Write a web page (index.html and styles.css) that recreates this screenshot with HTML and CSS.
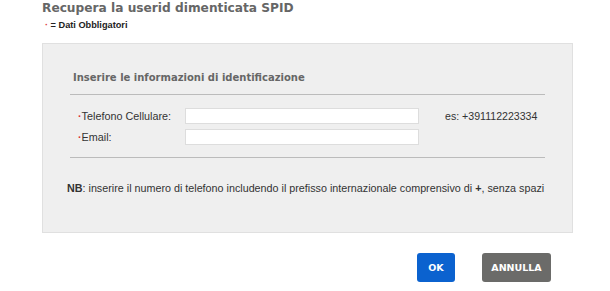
FILE: index.html
```html
<!DOCTYPE html>
<html lang="it">
<head>
    <meta charset="UTF-8">
    <title>Recupera userid SPID</title>
    <link rel="stylesheet" href="styles.css">
</head>
<body>
    <div class="page">
        <h1>Recupera la userid dimenticata SPID</h1>
        <p class="legend"><span class="req">&middot;</span> = Dati Obbligatori</p>

        <div class="panel">
            <h2>Inserire le informazioni di identificazione</h2>

            <div class="fields">
                <div class="row">
                    <label for="tel"><span class="req">&middot;</span>Telefono Cellulare:</label>
                    <input type="text" id="tel">
                    <span class="hint">es: +391112223334</span>
                </div>
                <div class="row">
                    <label for="email"><span class="req">&middot;</span>Email:</label>
                    <input type="text" id="email">
                </div>
            </div>

            <p class="note"><b>NB</b>: inserire il numero di telefono includendo il prefisso internazionale comprensivo di <b>+</b>, senza spazi</p>
        </div>

        <div class="actions">
            <button class="btn btn-ok">OK</button>
            <button class="btn btn-cancel">ANNULLA</button>
        </div>
    </div>
</body>
</html>
```
FILE: styles.css
```css
body {
  margin: 0;
  background-color: #fff;
  font-family: "Liberation Sans", Arial, sans-serif;
  color: #333;
}

.page {
  width: 531px;
  padding-left: 42px;
}

h1 {
  margin: 0;
  padding-top: 1px;
  font-family: "DejaVu Sans", Verdana, sans-serif;
  font-size: 12.2px;
  font-weight: bold;
  color: #666;
  line-height: 15px;
}

.legend {
  margin: 3px 0 0 3px;
  font-size: 9.2px;
  font-weight: bold;
  color: #222;
  line-height: 12px;
}

.req {
  color: #d33;
  font-weight: bold;
}

.panel {
  margin-top: 12px;
  height: 188px;
  background-color: #efefef;
  border: 1px solid #e0e0e0;
  padding: 0 27px;
}

h2 {
  margin: 27px 0 0 0;
  padding: 0 0 9px 3px;
  font-family: "DejaVu Sans", Verdana, sans-serif;
  font-size: 10px;
  font-weight: bold;
  color: #666;
  border-bottom: 1px solid #bbb;
  line-height: 14px;
}

.fields {
  padding: 13px 0 12px 0;
  border-bottom: 1px solid #bbb;
  display: flex;
  flex-direction: column;
  gap: 5px;
}

.row {
  display: flex;
  align-items: center;
  height: 16px;
}

.row label {
  width: 107px;
  padding-left: 8px;
  font-size: 10.8px;
  color: #333;
}

.row input {
  width: 232px;
  height: 14px;
  padding: 0;
  margin: 0;
  border: 1px solid #ddd;
  background-color: #fff;
}

.hint {
  margin-left: 26px;
  font-size: 10.6px;
  color: #333;
}

.note {
  margin: 24px 0 0 -3px;
  font-size: 10.75px;
  color: #333;
  white-space: nowrap;
}

.actions {
  display: flex;
  justify-content: flex-end;
  gap: 27px;
  margin-top: 20px;
  padding-right: 22px;
}

.btn {
  height: 29px;
  border: none;
  border-radius: 3px;
  color: #fff;
  font-family: "DejaVu Sans", Verdana, sans-serif;
  font-size: 9.5px;
  font-weight: bold;
  cursor: pointer;
}

.btn-ok {
  width: 38px;
  background-color: #0b62cf;
}

.btn-cancel {
  width: 69px;
  background-color: #6b6b69;
}
```
